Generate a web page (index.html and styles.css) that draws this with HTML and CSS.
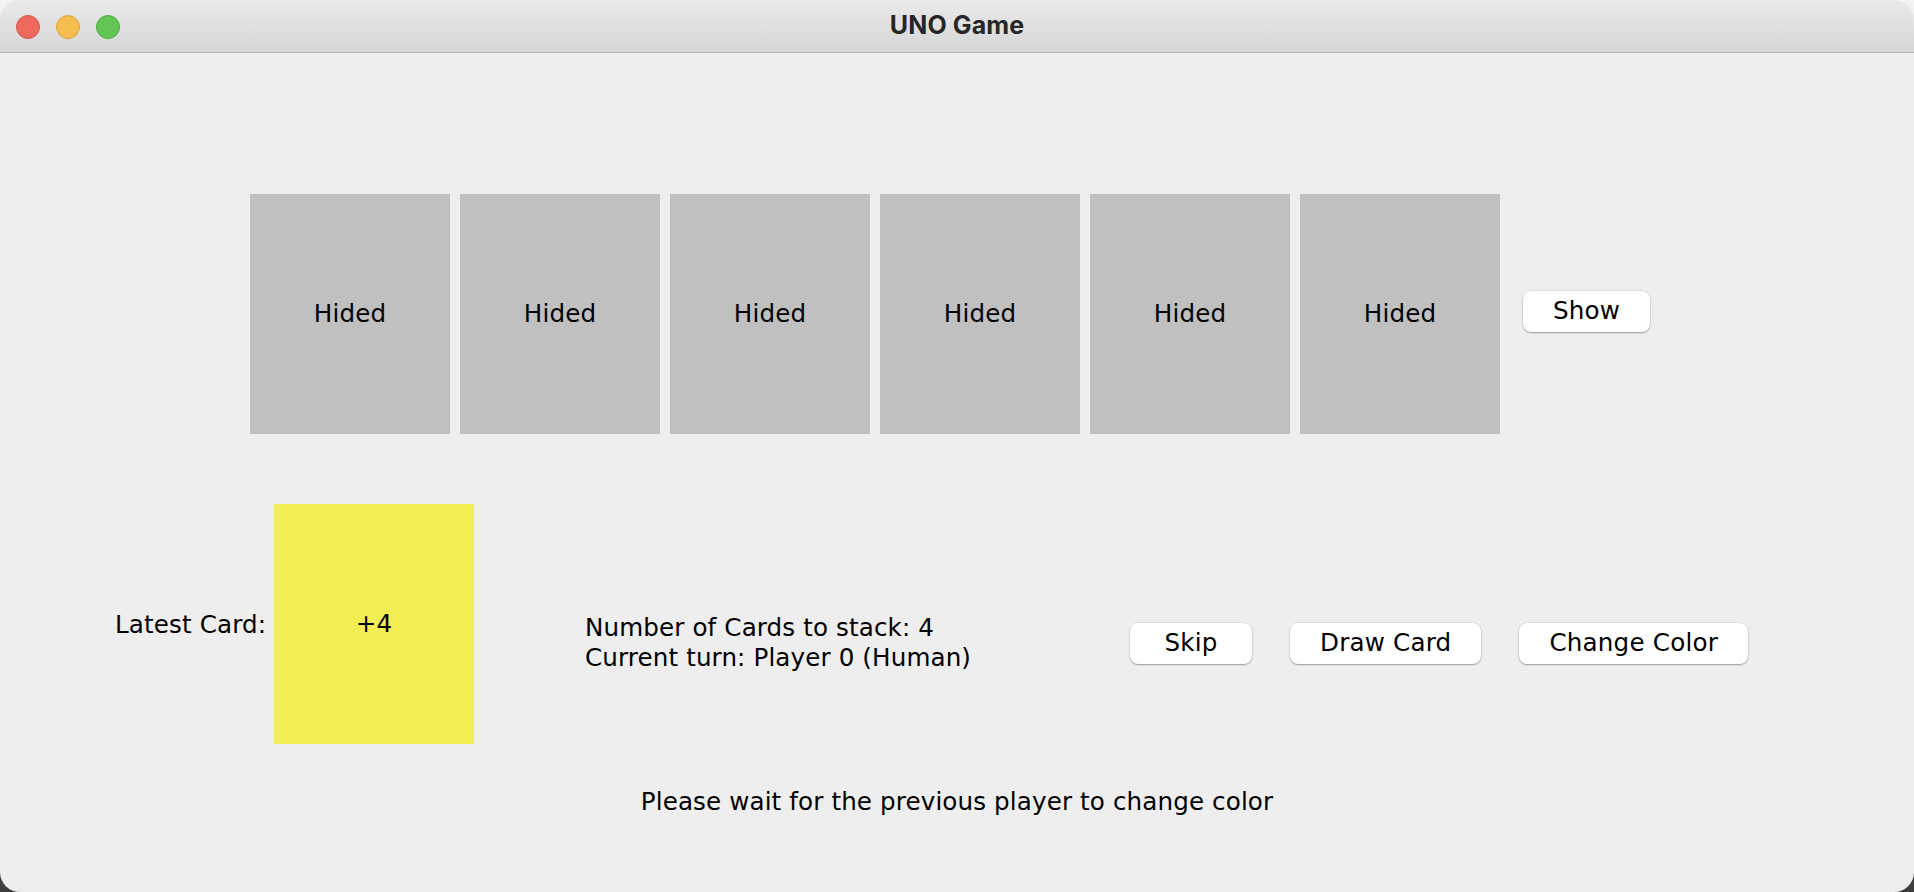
FILE: index.html
```html
<!DOCTYPE html>
<html lang="en">
<head>
<meta charset="utf-8">
<title>UNO Game</title>
<link rel="stylesheet" href="styles.css">
</head>
<body>
<div class="window">
  <div class="titlebar">
    <div class="lights">
      <span class="light red"></span>
      <span class="light yellow-light"></span>
      <span class="light green"></span>
    </div>
    <div class="title">UNO Game</div>
  </div>
  <div class="content">
    <div class="hand">
      <div class="card hidden-card">Hided</div>
      <div class="card hidden-card">Hided</div>
      <div class="card hidden-card">Hided</div>
      <div class="card hidden-card">Hided</div>
      <div class="card hidden-card">Hided</div>
      <div class="card hidden-card">Hided</div>
      <button class="btn show-btn">Show</button>
    </div>
    <div class="table">
      <span class="label">Latest Card:</span>
      <div class="card latest-card">+4</div>
      <div class="status">
        <div class="status-line">Number of Cards to stack: 4</div>
        <div class="status-line">Current turn: Player 0 (Human)</div>
      </div>
      <div class="actions">
        <button class="btn">Skip</button>
        <button class="btn">Draw Card</button>
        <button class="btn">Change Color</button>
      </div>
    </div>
    <div class="message">Please wait for the previous player to change color</div>
  </div>
</div>
</body>
</html>
```

FILE: styles.css
```css
* {
  box-sizing: border-box;
}

html, body {
  margin: 0;
  padding: 0;
  width: 1914px;
  height: 892px;
  overflow: hidden;
}

body {
  background: linear-gradient(to bottom, #f4f4f4 0%, #9a9a9a 70%, #3c3c3c 100%);
  font-family: "DejaVu Sans", sans-serif;
  color: #000;
}

.window {
  width: 1914px;
  height: 892px;
  border-radius: 20px;
  overflow: hidden;
  background: #eeeeee;
  display: flex;
  flex-direction: column;
}

.titlebar {
  height: 53px;
  flex: none;
  background: linear-gradient(to bottom, #eaeaea 0%, #d6d6d6 100%);
  border-bottom: 1px solid #b3b3b3;
  display: grid;
  grid-template-columns: 1fr auto 1fr;
  align-items: center;
}

.lights {
  display: flex;
  gap: 16px;
  padding-left: 16px;
  padding-top: 1px;
}

.light {
  width: 24px;
  height: 24px;
  border-radius: 50%;
  display: block;
}

.red {
  background: #ee6a5e;
  border: 1px solid #d4544a;
}

.yellow-light {
  background: #f6be4f;
  border: 1px solid #d9a23c;
}

.green {
  background: #62c554;
  border: 1px solid #4ca841;
}

.title {
  font-family: Inter, "Liberation Sans", sans-serif;
  font-weight: 700;
  font-size: 25px;
  color: #262626;
  letter-spacing: 0.1px;
  padding-bottom: 2px;
}

.content {
  flex: 1;
  padding-top: 141px;
  font-size: 24.6px;
  letter-spacing: 0.12px;
}

.hand {
  display: flex;
  align-items: center;
  gap: 10px;
  padding-left: 250px;
}

.card {
  width: 200px;
  height: 240px;
  flex: none;
  display: flex;
  align-items: center;
  justify-content: center;
  font-size: 24.6px;
  padding-bottom: 2px;
}

.hidden-card {
  background: #c0c0c0;
}

.latest-card {
  background: #f4ee55;
}

.btn {
  font-family: "DejaVu Sans", sans-serif;
  font-size: 24.6px;
  letter-spacing: 0.2px;
  color: #000;
  background: #ffffff;
  border: none;
  border-radius: 8px;
  height: 41px;
  min-width: 122px;
  padding: 0 30px;
  box-shadow: 0 1px 1.5px rgba(0, 0, 0, 0.3), 0 0 0 0.5px rgba(0, 0, 0, 0.12);
  flex: none;
  line-height: 1;
}

.show-btn {
  margin-left: 13px;
  min-width: 0;
  margin-top: -5px;
}

.table {
  display: flex;
  align-items: center;
  margin-top: 70px;
  padding-left: 115px;
}

.label {
  width: 159px;
  flex: none;
  white-space: nowrap;
}

.status {
  margin-left: 111px;
  margin-top: 38px;
  width: 545px;
  flex: none;
}

.status-line {
  line-height: 30px;
  white-space: nowrap;
}

.actions {
  display: flex;
  gap: 38px;
  margin-top: 38px;
}

.message {
  margin-top: 43px;
  text-align: center;
  line-height: 30px;
}
```
